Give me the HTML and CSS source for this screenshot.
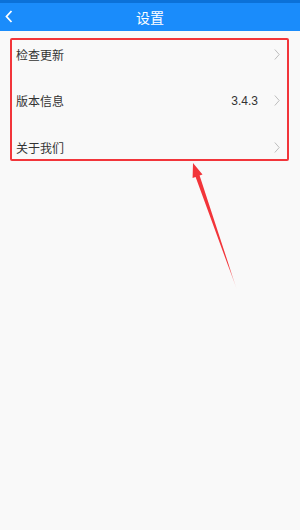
FILE: index.html
```html
<!DOCTYPE html>
<html lang="zh-CN">
<head>
    <meta charset="UTF-8">
    <meta name="viewport" content="width=device-width, initial-scale=1.0">
    <title>设置</title>
    <link rel="stylesheet" href="styles.css">
</head>
<body>
    <div class="page">
        <header class="topbar">
            <span class="back">
                <svg width="8" height="13" viewBox="0 0 8 13"><path d="M6.5 1 L1.5 6.5 L6.5 12" fill="none" stroke="#fff" stroke-width="1.8"/></svg>
            </span>
            <h1 class="title">设置</h1>
        </header>

        <ul class="menu">
            <li class="menu-item">
                <span class="label">检查更新</span>
                <span class="arrow"><svg width="6" height="11" viewBox="0 0 6 11"><path d="M0.8 0.5 L5.2 5.5 L0.8 10.5" fill="none" stroke="#bdbdbd" stroke-width="1"/></svg></span>
            </li>
            <li class="menu-item">
                <span class="label">版本信息</span>
                <span class="value">3.4.3</span>
                <span class="arrow"><svg width="6" height="11" viewBox="0 0 6 11"><path d="M0.8 0.5 L5.2 5.5 L0.8 10.5" fill="none" stroke="#bdbdbd" stroke-width="1"/></svg></span>
            </li>
            <li class="menu-item">
                <span class="label">关于我们</span>
                <span class="arrow"><svg width="6" height="11" viewBox="0 0 6 11"><path d="M0.8 0.5 L5.2 5.5 L0.8 10.5" fill="none" stroke="#bdbdbd" stroke-width="1"/></svg></span>
            </li>
        </ul>

        <!-- annotation -->
        <div class="mark-box"></div>
        <svg class="mark-arrow" width="300" height="530" viewBox="0 0 300 530">
            <defs>
                <linearGradient id="fade" x1="193" y1="163" x2="237" y2="290" gradientUnits="userSpaceOnUse">
                    <stop offset="0" stop-color="#f2353a"/>
                    <stop offset="0.8" stop-color="#f2353a"/>
                    <stop offset="1" stop-color="#f2353a" stop-opacity="0"/>
                </linearGradient>
            </defs>
            <polygon points="193,163 202.5,174.5 199.6,175.6 237,290 195.6,177 192.6,178" fill="url(#fade)"/>
        </svg>
    </div>
</body>
</html>
```

FILE: styles.css
```css
* {box-sizing:border-box;}
body {
    margin:0;
    background:#f9f9f9;
    font-family:"Noto Sans CJK SC", "Liberation Sans", sans-serif;
}
.page {
    position:relative;
    width:300px;
    height:530px;
    overflow:hidden;
}
.topbar {
    display:flex;
    align-items:center;
    justify-content:center;
    position:relative;
    height:31px;
    background:#1a8cfb;
    border-top:3px solid #0b71d8;
}
.back {
    display:flex;
    position:absolute;
    left:5px;
    top:7px;
}
.title {
    margin:0 0 1px;
    font-size:14px;
    font-weight:normal;
    color:#fff;
    line-height:1;
}
.menu {
    list-style:none;
    margin:0;
    padding:0;
}
.menu-item {
    display:flex;
    align-items:center;
    height:46.5px;
    padding:0 20px 0 16px;
    font-size:12px;
    color:#333;
}
.label {flex:1;}
.value {
    margin-right:16px;
    font-family:"Liberation Sans", sans-serif;
    color:#333;
}
.arrow {
    display:flex;
    width:6px;
}
.mark-box {
    position:absolute;
    left:10px;
    top:38px;
    width:279px;
    height:123px;
    border:2px solid #f2353a;
    border-radius:2px;
}
.mark-arrow {
    position:absolute;
    left:0;
    top:0;
}
```
